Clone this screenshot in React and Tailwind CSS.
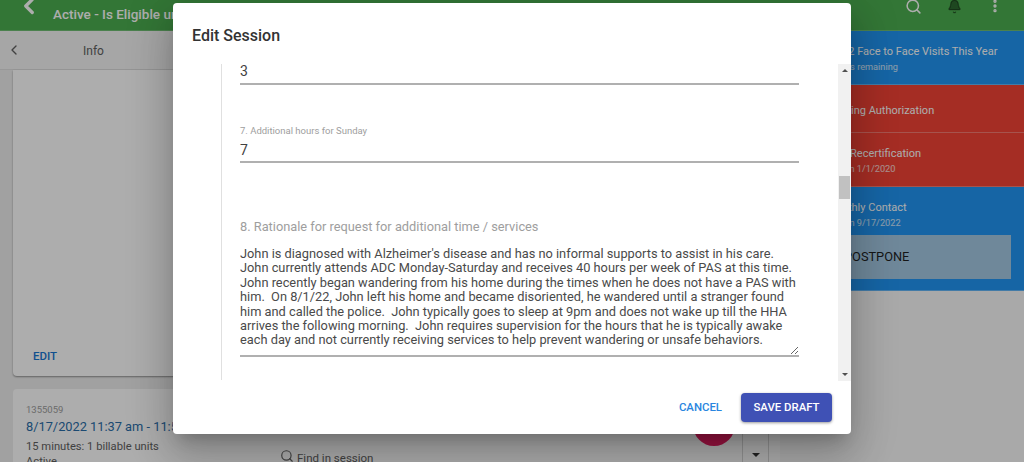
import React from "react";
import { ChevronLeft, Search, Bell, EllipsisVertical } from "lucide-react";

const note = `John is diagnosed with Alzheimer's disease and has no informal supports to assist in his care.
John currently attends ADC Monday-Saturday and receives 40 hours per week of PAS at this time.
John recently began wandering from his home during the times when he does not have a PAS with
him.  On 8/1/22, John left his home and became disoriented, he wandered until a stranger found
him and called the police.  John typically goes to sleep at 9pm and does not wake up till the HHA
arrives the following morning.  John requires supervision for the hours that he is typically awake
each day and not currently receiving services to help prevent wandering or unsafe behaviors.`;

function Alert({ color, title, sub, h, pt = "pt-[13px]", children }) {
  return (
    <div className={`${color} ${h} ${pt} border-b border-white/30 pl-[46px] text-white`}>
      <div className="text-[11px] leading-[16px] whitespace-nowrap">{title}</div>
      {sub && <div className="text-[9.2px] leading-[14px] text-white/80 whitespace-nowrap">{sub}</div>}
      {children}
    </div>
  );
}

export default function App() {
  return (
    <div className="relative w-[1024px] h-[462px] overflow-hidden bg-[#fafafa] font-['Roboto',sans-serif]">
      <header className="h-[31px] bg-[#4caf50] border-b border-white/20 flex items-center text-white">
        <ChevronLeft className="ml-[16px] w-[26px] h-[26px] -mt-[18px]" strokeWidth={3} />
        <span className="ml-[11px] -mt-[2px] text-[13.5px] font-medium whitespace-nowrap">Active - Is Eligible until 12/31/2022</span>
        <div className="ml-auto flex items-center gap-[25px] mr-[21px] -mt-[18px]">
          <Search className="w-[17px] h-[17px]" strokeWidth={2.2} />
          <Bell className="w-[15px] h-[15px] fill-black/40 text-black/40" />
          <EllipsisVertical className="w-[16px] h-[16px]" strokeWidth={3} />
        </div>
      </header>
      <div className="flex h-[431px]">
        <aside className="w-[270px] shrink-0 bg-[#eeeeee] flex flex-col">
          <div className="h-[39px] shrink-0 bg-[#f5f5f5] border-b border-[#e0e0e0] flex items-center text-[#616161]">
            <ChevronLeft className="ml-[6px] w-[16px] h-[16px]" />
            <span className="ml-[61px] mt-[1px] text-[12px]">Info</span>
          </div>
          <div className="ml-[13px] h-[306px] shrink-0 bg-white rounded-b shadow-[0_1px_2px_rgba(0,0,0,0.4)] flex flex-col justify-end pl-[20px] pb-[11px]">
            <span className="text-[11.5px] font-medium text-[#1976d2]">EDIT</span>
          </div>
          <div className="ml-[13px] mt-[13px] flex-1 bg-white rounded-t pl-[13px] pt-[14px]">
            <div className="text-[9.5px] leading-[14px] text-[#9e9e9e]">1355059</div>
            <div className="text-[12.8px] leading-[20px] text-[#2a6da8] whitespace-nowrap">8/17/2022 11:37 am - 11:52 am</div>
            <div className="text-[11.2px] leading-[16px] mt-[2px] text-[#616161]">15 minutes: 1 billable units</div>
            <div className="text-[11.2px] leading-[14px] text-[#616161]">Active</div>
          </div>
        </aside>
        <main className="flex-1 bg-[#f5f5f5] flex flex-col justify-end">
          <div className="h-[28px] bg-white flex items-end text-[#616161]">
            <Search className="ml-[10px] -mb-[1px] w-[14px] h-[14px] shrink-0" />
            <span className="ml-[3px] -mb-[2px] text-[11.5px] leading-[11px]">Find in session</span>
            <div className="ml-auto mr-[11px] w-[27px] h-full border-x border-[#d8d8d8] flex justify-center items-center">
              <span className="mt-[13px] w-0 h-0 border-x-[4px] border-x-transparent border-t-[4px] border-t-[#333]" />
            </div>
          </div>
        </main>
        <aside className="w-[244px] shrink-0 bg-[#fafafa]">
          <Alert color="bg-[#2196f3]" h="h-[54px]" title="Has 2 Face to Face Visits This Year" sub="2 visits remaining" />
          <Alert color="bg-[#f44336]" h="h-[48px]" pt="pt-[18px]" title="Pending Authorization" />
          <Alert color="bg-[#f44336]" h="h-[54px]" title="Late Recertification" sub="Due on 1/1/2020" />
          <Alert color="bg-[#2196f3]" h="h-[104px]" title="Monthly Contact" sub="Due on 9/17/2022">
            <div className="-ml-[46px] mt-[5px] mr-[13px] h-[44px] bg-[#a4c9e4] text-[#1f1f1f] text-[12.8px] flex items-center pl-[64px]">POSTPONE</div>
          </Alert>
        </aside>
      </div>
      <div className="absolute left-[693px] top-[404px] w-[42px] h-[42px] rounded-full bg-[#e91e63]" />
      <div className="absolute inset-0 bg-black/32" />

      <div className="absolute left-[173px] top-[3px] w-[678px] h-[431px] bg-white rounded shadow-[0_11px_15px_-7px_rgba(0,0,0,0.2),0_24px_38px_3px_rgba(0,0,0,0.14),0_9px_46px_8px_rgba(0,0,0,0.12)] flex flex-col">
        <h2 className="h-[61px] shrink-0 pl-[19px] pt-[22px] text-[16px] leading-[22px] font-medium text-[#333333]">Edit Session</h2>
        <div className="h-[317px] shrink-0 flex">
          <div className="flex-1 pl-[48px]">
            <div className="h-[316px] border-l border-[#e0e0e0] pl-[18px] pr-[39px] text-[#424242]">
              <div className="text-[14px] leading-[14px] h-[21px] border-b-2 border-[#b0b0b0]">3</div>
              <div className="mt-[40px] text-[9.5px] leading-[12px] text-[#9e9e9e]">7. Additional hours for Sunday</div>
              <div className="mt-[6px] text-[14px] leading-[14px] h-[20px] border-b-2 border-[#b0b0b0]">7</div>
              <div className="mt-[55px] text-[12.8px] leading-[18px] text-[#9e9e9e]">8. Rationale for request for additional time / services</div>
              <textarea
                readOnly
                wrap="off"
                defaultValue={note}
                className="block mt-[10px] w-full h-[111px] border-b-2 border-[#b0b0b0] overflow-hidden resize-y text-[12.8px] leading-[14.4px] text-[#4a4a4a] font-['Roboto',sans-serif] outline-none pt-[1px]"
              />
            </div>
          </div>
          <div className="w-[13px] shrink-0 bg-[#f1f1f1] flex flex-col items-center relative">
            <span className="mt-[5px] w-0 h-0 border-x-[3px] border-x-transparent border-b-[3px] border-b-[#505050]" />
            <span className="mt-[104px] w-[11px] h-[23px] bg-[#c1c1c1]" />
            <span className="mt-auto mb-[5px] w-0 h-0 border-x-[3px] border-x-transparent border-t-[3px] border-t-[#505050]" />
          </div>
        </div>
        <div className="flex-1 flex items-start justify-end pr-[19px] pt-[12px] gap-[19px]">
          <span className="h-[29px] flex items-center text-[11.4px] font-medium text-[#2a86e0]">CANCEL</span>
          <span className="w-[91px] h-[29px] rounded bg-[#3f51b5] text-white text-[11.4px] font-medium flex items-center justify-center shadow-[0_1px_3px_rgba(0,0,0,0.4)]">SAVE DRAFT</span>
        </div>
      </div>
    </div>
  );
}
